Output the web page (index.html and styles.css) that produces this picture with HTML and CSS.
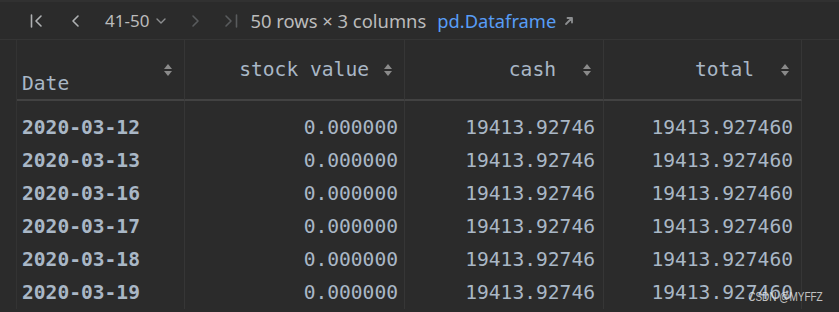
FILE: index.html
```html
<!DOCTYPE html>
<html lang="en">
<head>
  <meta charset="UTF-8">
  <title>DataFrame viewer</title>
  <link rel="stylesheet" href="styles.css">
</head>
<body>
  <div class="toolbar">
    <svg class="nav nav-first" width="16" height="16" viewBox="0 0 16 16"><path d="M2.5 2v12M12 3L7 8l5 5" /></svg>
    <svg class="nav nav-prev" width="16" height="16" viewBox="0 0 16 16"><path d="M10 3L5 8l5 5" /></svg>
    <span class="page">41-50</span>
    <svg class="drop" width="12" height="12" viewBox="0 0 12 12"><path d="M2 4l4 4 4-4" /></svg>
    <svg class="nav nav-next off" width="16" height="16" viewBox="0 0 16 16"><path d="M6 3l5 5-5 5" /></svg>
    <svg class="nav nav-last off" width="16" height="16" viewBox="0 0 16 16"><path d="M3 3l5 5-5 5M13.5 2v12" /></svg>
    <span class="shape">50 rows × 3 columns</span>
    <span class="link">pd.Dataframe</span>
    <svg class="ext" width="10" height="10" viewBox="0 0 10 10"><path d="M2 8l6-6M3.5 2H8v4.5" /></svg>
  </div>

  <div class="frame">
    <div class="gutter"></div>
    <div class="grid">
      <div class="th th-index">
        <span class="label">Date</span>
        <span class="sort"></span>
      </div>
      <div class="th"><span class="label">stock value</span><span class="sort"></span></div>
      <div class="th"><span class="label wide">cash</span><span class="sort"></span></div>
      <div class="th"><span class="label wide">total</span><span class="sort"></span></div>

      <div class="td idx first">2020-03-12</div>
      <div class="td num tight first">0.000000</div>
      <div class="td num first">19413.92746</div>
      <div class="td num first">19413.927460</div>

      <div class="td idx">2020-03-13</div>
      <div class="td num tight">0.000000</div>
      <div class="td num">19413.92746</div>
      <div class="td num">19413.927460</div>

      <div class="td idx">2020-03-16</div>
      <div class="td num tight">0.000000</div>
      <div class="td num">19413.92746</div>
      <div class="td num">19413.927460</div>

      <div class="td idx">2020-03-17</div>
      <div class="td num tight">0.000000</div>
      <div class="td num">19413.92746</div>
      <div class="td num">19413.927460</div>

      <div class="td idx">2020-03-18</div>
      <div class="td num tight">0.000000</div>
      <div class="td num">19413.92746</div>
      <div class="td num">19413.927460</div>

      <div class="td idx">2020-03-19</div>
      <div class="td num tight">0.000000</div>
      <div class="td num">19413.92746</div>
      <div class="td num">19413.927460</div>
    </div>
  </div>

  <div class="watermark">CSDN @MYFFZ</div>
</body>
</html>
```

FILE: styles.css
```css
body {
  margin: 0;
  height: 312px;
  overflow: hidden;
  background-color: #2b2b2b;
  font-family: 'DejaVu Sans Mono', monospace;
  position: relative;
}

/* Toolbar */
.toolbar {
  display: flex;
  align-items: center;
  height: 37px;
  border-top: 2px solid #313131;
  border-bottom: 1px solid #353535;
  font-family: 'Noto Sans', 'Open Sans', sans-serif;
  font-size: 18px;
  color: #bbbbbb;
}

.nav path,
.drop path,
.ext path {
  fill: none;
  stroke-width: 1.6;
  stroke-linecap: round;
  stroke-linejoin: round;
}

.nav path {
  stroke: #afb1b3;
}

.nav.off path {
  stroke: #595b5d;
}

.nav-first {
  margin-left: 29px;
}

.nav-prev {
  margin-left: 23px;
}

.page {
  margin-left: 21px;
  font-size: 17px;
}

.drop {
  margin-left: 6px;
}

.drop path {
  stroke: #8c8e90;
  stroke-width: 1.4;
}

.nav-next {
  margin-left: 20px;
}

.nav-last {
  margin-left: 20px;
}

.shape {
  margin-left: 11px;
  font-size: 18.4px;
}

.link {
  margin-left: 11px;
  font-size: 18.3px;
  color: #589df6;
}

.ext {
  margin-left: 8px;
}

.ext path {
  stroke: #8c8e90;
  stroke-width: 1.8;
}

/* Table */
.frame {
  display: flex;
}

.gutter {
  width: 16px;
  border-right: 1px solid #333333;
}

.grid {
  display: grid;
  grid-template-columns: 168px 220px 199px 198px;
  grid-template-rows: 61px 43px repeat(5, 33px);
  color: #a9b7c6;
  font-size: 19.6px;
}

.th {
  border-bottom: 2px solid #424242;
  border-right: 1px solid #363636;
  display: flex;
  align-items: center;
  justify-content: flex-end;
  padding-right: 12px;
  gap: 15px;
}

.th-index {
  justify-content: space-between;
  padding-left: 5px;
}

.th-index .label {
  align-self: flex-end;
  padding-bottom: 4px;
}

.label.wide {
  padding-right: 12px;
}

.sort {
  width: 8px;
  height: 12px;
  position: relative;
}

.sort::before,
.sort::after {
  content: '';
  position: absolute;
  left: 0;
  border-left: 4px solid transparent;
  border-right: 4px solid transparent;
}

.sort::before {
  top: 0;
  border-bottom: 5px solid #8a8a8a;
}

.sort::after {
  bottom: 0;
  border-top: 5px solid #8a8a8a;
}

.td {
  line-height: 33px;
  border-right: 1px solid #363636;
  white-space: nowrap;
}

.td.first {
  padding-top: 10px;
}

.idx {
  font-weight: bold;
  padding-left: 5px;
}

.num {
  text-align: right;
  padding-right: 8px;
}

.num.tight {
  padding-right: 6px;
}

.watermark {
  position: absolute;
  right: 16px;
  bottom: 8px;
  font-family: 'Liberation Sans', sans-serif;
  font-size: 13.5px;
  color: rgba(235, 235, 235, 0.8);
  transform: scaleX(0.74);
  transform-origin: right center;
}
```
